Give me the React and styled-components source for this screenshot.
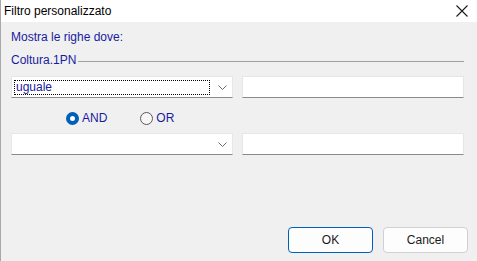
import React, { useState } from 'react';
import styled, { createGlobalStyle } from 'styled-components';

const GlobalStyle = createGlobalStyle`
  html, body {
    margin: 0;
    padding: 0;
    background: #f0f0f0;
  }
`;

const App = () => {
  const [mode, setMode] = useState('and');

  return (
    <>
      <GlobalStyle />
      <Window>
        <TitleBar>
          <Title>Filtro personalizzato</Title>
          <CloseButton aria-label='close'>
            <svg width='12' height='12' viewBox='0 0 12 12'>
              <path d='M0.5 0.5 L11.5 11.5 M11.5 0.5 L0.5 11.5' stroke='#1a1a1a' strokeWidth='1.1' fill='none' />
            </svg>
          </CloseButton>
        </TitleBar>
        <Body>
          <Label>Mostra le righe dove:</Label>
          <GroupHeader>
            <Label>Coltura.1PN</Label>
            <Rule />
          </GroupHeader>
          <Row>
            <Combo>
              <ComboText focused>uguale</ComboText>
              <Chevron />
            </Combo>
            <TextBox />
          </Row>
          <RadioRow>
            <Radio onClick={() => setMode('and')}>
              <RadioDot checked={mode === 'and'} />
              <span>AND</span>
            </Radio>
            <Radio onClick={() => setMode('or')}>
              <RadioDot checked={mode === 'or'} />
              <span>OR</span>
            </Radio>
          </RadioRow>
          <Row>
            <Combo>
              <ComboText />
              <Chevron />
            </Combo>
            <TextBox />
          </Row>
        </Body>
        <Footer>
          <Button primary>OK</Button>
          <Button>Cancel</Button>
        </Footer>
      </Window>
    </>
  );
};
export default App;

const Chevron = () => (
  <ChevronBox>
    <svg width='9' height='5' viewBox='0 0 9 5'>
      <path d='M0.5 0.5 L4.5 4.5 L8.5 0.5' stroke='#6a6a6a' strokeWidth='1' fill='none' />
    </svg>
  </ChevronBox>
);

const Window = styled.div`
  width: 477px;
  height: 261px;
  display: flex;
  flex-direction: column;
  box-sizing: border-box;
  font-family: 'Liberation Sans', Arial, sans-serif;
  font-size: 12px;
  background: #f0f0f0;
  border-left: 1px solid #a8a8a8;
`;

const TitleBar = styled.div`
  height: 22px;
  flex: none;
  display: flex;
  align-items: center;
  justify-content: space-between;
  background: #ffffff;
  padding: 0 9px 0 3px;
`;

const Title = styled.span`
  font-family: 'Liberation Sans', Arial, sans-serif;
  font-size: 12px;
  color: #000000;
  margin-top: -1px;
`;

const CloseButton = styled.div`
  display: flex;
  align-items: center;
  width: 12px;
  height: 12px;
`;

const Body = styled.div`
  flex: 1;
  display: flex;
  flex-direction: column;
  padding: 8px 13px 0 10px;
`;

const Label = styled.div`
  color: #1a1aa0;
  font-size: 12px;
  line-height: 14px;
  white-space: nowrap;
`;

const GroupHeader = styled.div`
  display: flex;
  align-items: center;
  gap: 2px;
  margin-top: 9px;
`;

const Rule = styled.div`
  flex: 1;
  height: 1px;
  margin-top: 2px;
  background: #a0a0a0;
`;

const Row = styled.div`
  display: grid;
  grid-template-columns: 222px 222px;
  column-gap: 9px;
  margin-top: 9px;
`;

const Field = styled.div`
  height: 22px;
  box-sizing: border-box;
  background: #ffffff;
  border: 1px solid #e6e6e6;
  border-bottom: 1px solid #8a8a8a;
`;

const Combo = styled(Field)`
  display: flex;
  align-items: center;
  padding: 0 5px 0 2px;
`;

const ComboText = styled.div`
  flex: 1;
  height: 15px;
  box-sizing: border-box;
  margin-right: 8px;
  padding-left: 1px;
  line-height: 13px;
  color: #1a1aa0;
  border: 1px dotted ${p => (p.focused ? '#000000' : 'transparent')};
`;

const ChevronBox = styled.div`
  display: flex;
  align-items: center;
  margin-top: 1px;
`;

const TextBox = styled(Field)``;

const RadioRow = styled.div`
  display: flex;
  gap: 33px;
  padding-left: 55px;
  margin-top: 13px;
  margin-bottom: -1px;
`;

const Radio = styled.label`
  display: flex;
  align-items: center;
  gap: 3px;
  color: #1a1aa0;
  line-height: 14px;
  cursor: pointer;
`;

const RadioDot = styled.span`
  width: 13px;
  height: 13px;
  box-sizing: border-box;
  border-radius: 50%;
  background: ${p => (p.checked ? '#ffffff' : '#f6f6f6')};
  border: ${p => (p.checked ? '4px solid #005fb8' : '1px solid #5a5a5a')};
`;

const Footer = styled.div`
  display: flex;
  justify-content: flex-end;
  gap: 10px;
  padding: 0 9px 8px 0;
`;

const Button = styled.button`
  width: 85px;
  height: 26px;
  box-sizing: border-box;
  border-radius: 4px;
  font-family: 'Liberation Sans', Arial, sans-serif;
  font-size: 12px;
  color: #1a1a1a;
  background: #fdfdfd;
  border: 1px solid ${p => (p.primary ? '#005fb8' : '#d0d0d0')};
  padding: 0;
`;
